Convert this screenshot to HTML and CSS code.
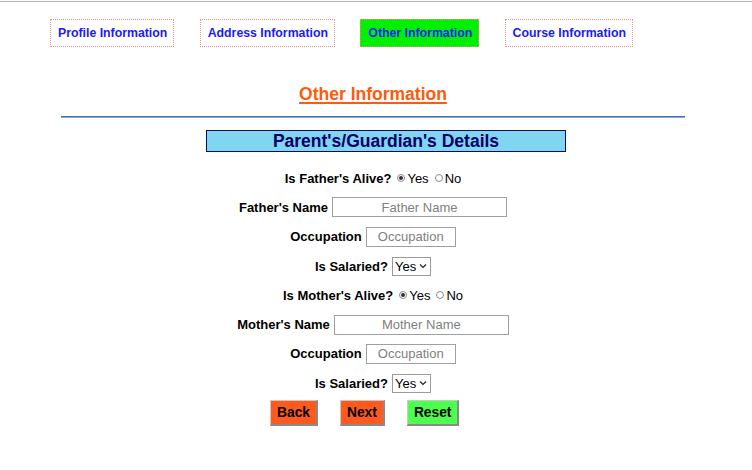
FILE: index.html
```html
<!DOCTYPE html>
<html>
<head>
<meta charset="utf-8">
<title>Other Information</title>
<link rel="stylesheet" href="styles.css">
</head>
<body>
<div class="page">
  <nav class="tabs">
    <a class="tab">Profile Information</a>
    <a class="tab">Address Information</a>
    <a class="tab active">Other Information</a>
    <a class="tab">Course Information</a>
  </nav>
  <h2 class="title">Other Information</h2>
  <div class="rule"></div>
  <div class="boxwrap"><div class="section-head">Parent's/Guardian's Details</div></div>
  <form class="form">
    <div class="row">
      <span class="label">Is Father's Alive?</span>
      <label class="opt"><input type="radio" name="fa" checked>Yes</label>
      <label class="opt"><input type="radio" name="fa">No</label>
    </div>
    <div class="row">
      <span class="label">Father's Name</span>
      <input class="field wide" type="text" placeholder="Father Name">
    </div>
    <div class="row">
      <span class="label">Occupation</span>
      <input class="field short" type="text" placeholder="Occupation">
    </div>
    <div class="row">
      <span class="label">Is Salaried?</span>
      <span class="select">Yes<svg width="8" height="6" viewBox="0 0 8 6"><path d="M1 1.5 L4 4.5 L7 1.5" fill="none" stroke="#222" stroke-width="1.2"/></svg></span>
    </div>
    <div class="row">
      <span class="label">Is Mother's Alive?</span>
      <label class="opt"><input type="radio" name="ma" checked>Yes</label>
      <label class="opt"><input type="radio" name="ma">No</label>
    </div>
    <div class="row">
      <span class="label">Mother's Name</span>
      <input class="field wide" type="text" placeholder="Mother Name">
    </div>
    <div class="row">
      <span class="label">Occupation</span>
      <input class="field short" type="text" placeholder="Occupation">
    </div>
    <div class="row">
      <span class="label">Is Salaried?</span>
      <span class="select">Yes<svg width="8" height="6" viewBox="0 0 8 6"><path d="M1 1.5 L4 4.5 L7 1.5" fill="none" stroke="#222" stroke-width="1.2"/></svg></span>
    </div>
    <div class="buttons">
      <button type="button" class="btn orange">Back</button>
      <button type="button" class="btn orange">Next</button>
      <button type="button" class="btn green">Reset</button>
    </div>
  </form>
</div>
</body>
</html>
```

FILE: styles.css
```css
html, body {
  margin: 0;
  padding: 0;
  background: #fff;
}
body {
  font-family: "Liberation Sans", Arial, sans-serif;
  color: #000;
  margin-top: 1px;
  border-top: 1px solid #b4b4b4;
}
.page {
  width: 746px;
}
.tabs {
  display: flex;
  gap: 25.4px;
  padding-left: 50px;
  padding-top: 17px;
}
.tab {
  display: block;
  height: 26px;
  line-height: 26px;
  padding: 0 6px 0 7px;
  border: 1px dotted #f28a8a;
  color: #1a1aff;
  font-weight: bold;
  font-size: 12.3px;
}
.tab.active {
  background: #00f000;
}
.title {
  margin: 37px 0 0;
  text-align: center;
  font-size: 17.5px;
  line-height: 20px;
  color: #ff5a0a;
  text-decoration: underline;
  text-decoration-thickness: 2px;
  text-underline-offset: 2px;
}
.rule {
  margin: 12px 61px 0;
  border-top: 1px solid #3d6fbf;
  border-bottom: 1px solid #8fa6c8;
}
.boxwrap {
  padding-left: 206px;
  margin-top: 12px;
}
.section-head {
  width: 358px;
  height: 20px;
  line-height: 20px;
  background: #80d5f0;
  border: 1px solid #0a0a60;
  text-align: center;
  color: #000066;
  font-weight: bold;
  font-size: 17.5px;
}
.form {
  margin-top: 11.5px;
}
.row {
  height: 29.3px;
  display: flex;
  align-items: center;
  justify-content: center;
  font-size: 13px;
}
.label {
  font-weight: bold;
  margin-right: 4px;
}
.opt {
  display: flex;
  align-items: center;
  font-size: 13px;
  margin-left: 2px;
}
.opt + .opt {
  margin-left: 6px;
}
.opt input {
  appearance: none;
  -webkit-appearance: none;
  width: 8px;
  height: 8px;
  margin: 0 2px 0 0;
  border: 1px solid #8a8a8a;
  border-radius: 50%;
  display: flex;
  align-items: center;
  justify-content: center;
  background: #fff;
}
.opt input:checked::after {
  content: "";
  width: 4px;
  height: 4px;
  border-radius: 50%;
  background: #333;
}
.field {
  box-sizing: border-box;
  height: 20px;
  border: 1px solid #a0a0a0;
  border-radius: 0;
  padding: 0 2px;
  font-family: "Liberation Sans", Arial, sans-serif;
  font-size: 13px;
  text-align: center;
  outline: none;
}
.field::placeholder {
  color: #808080;
}
.field.wide {
  width: 175px;
}
.field.short {
  width: 90px;
}
.select {
  box-sizing: border-box;
  display: inline-flex;
  align-items: center;
  gap: 3px;
  height: 19px;
  width: 39px;
  padding: 0 2px;
  border: 1px solid #9a9a9a;
  font-size: 13px;
}
.buttons {
  display: flex;
  gap: 22px;
  padding-left: 270px;
  margin-top: 2.5px;
}
.btn {
  box-sizing: border-box;
  height: 26px;
  padding: 0 6px;
  font-family: "Liberation Sans", Arial, sans-serif;
  font-weight: bold;
  font-size: 13.8px;
  color: #000;
  border: 1px solid #c8c8c8;
  border-right: 2px solid #8a8a8a;
  border-bottom: 2px solid #8a8a8a;
  border-radius: 0;
}
.btn.orange {
  background: #ff5a1e;
}
.btn.green {
  background: #4cff4c;
}
```
